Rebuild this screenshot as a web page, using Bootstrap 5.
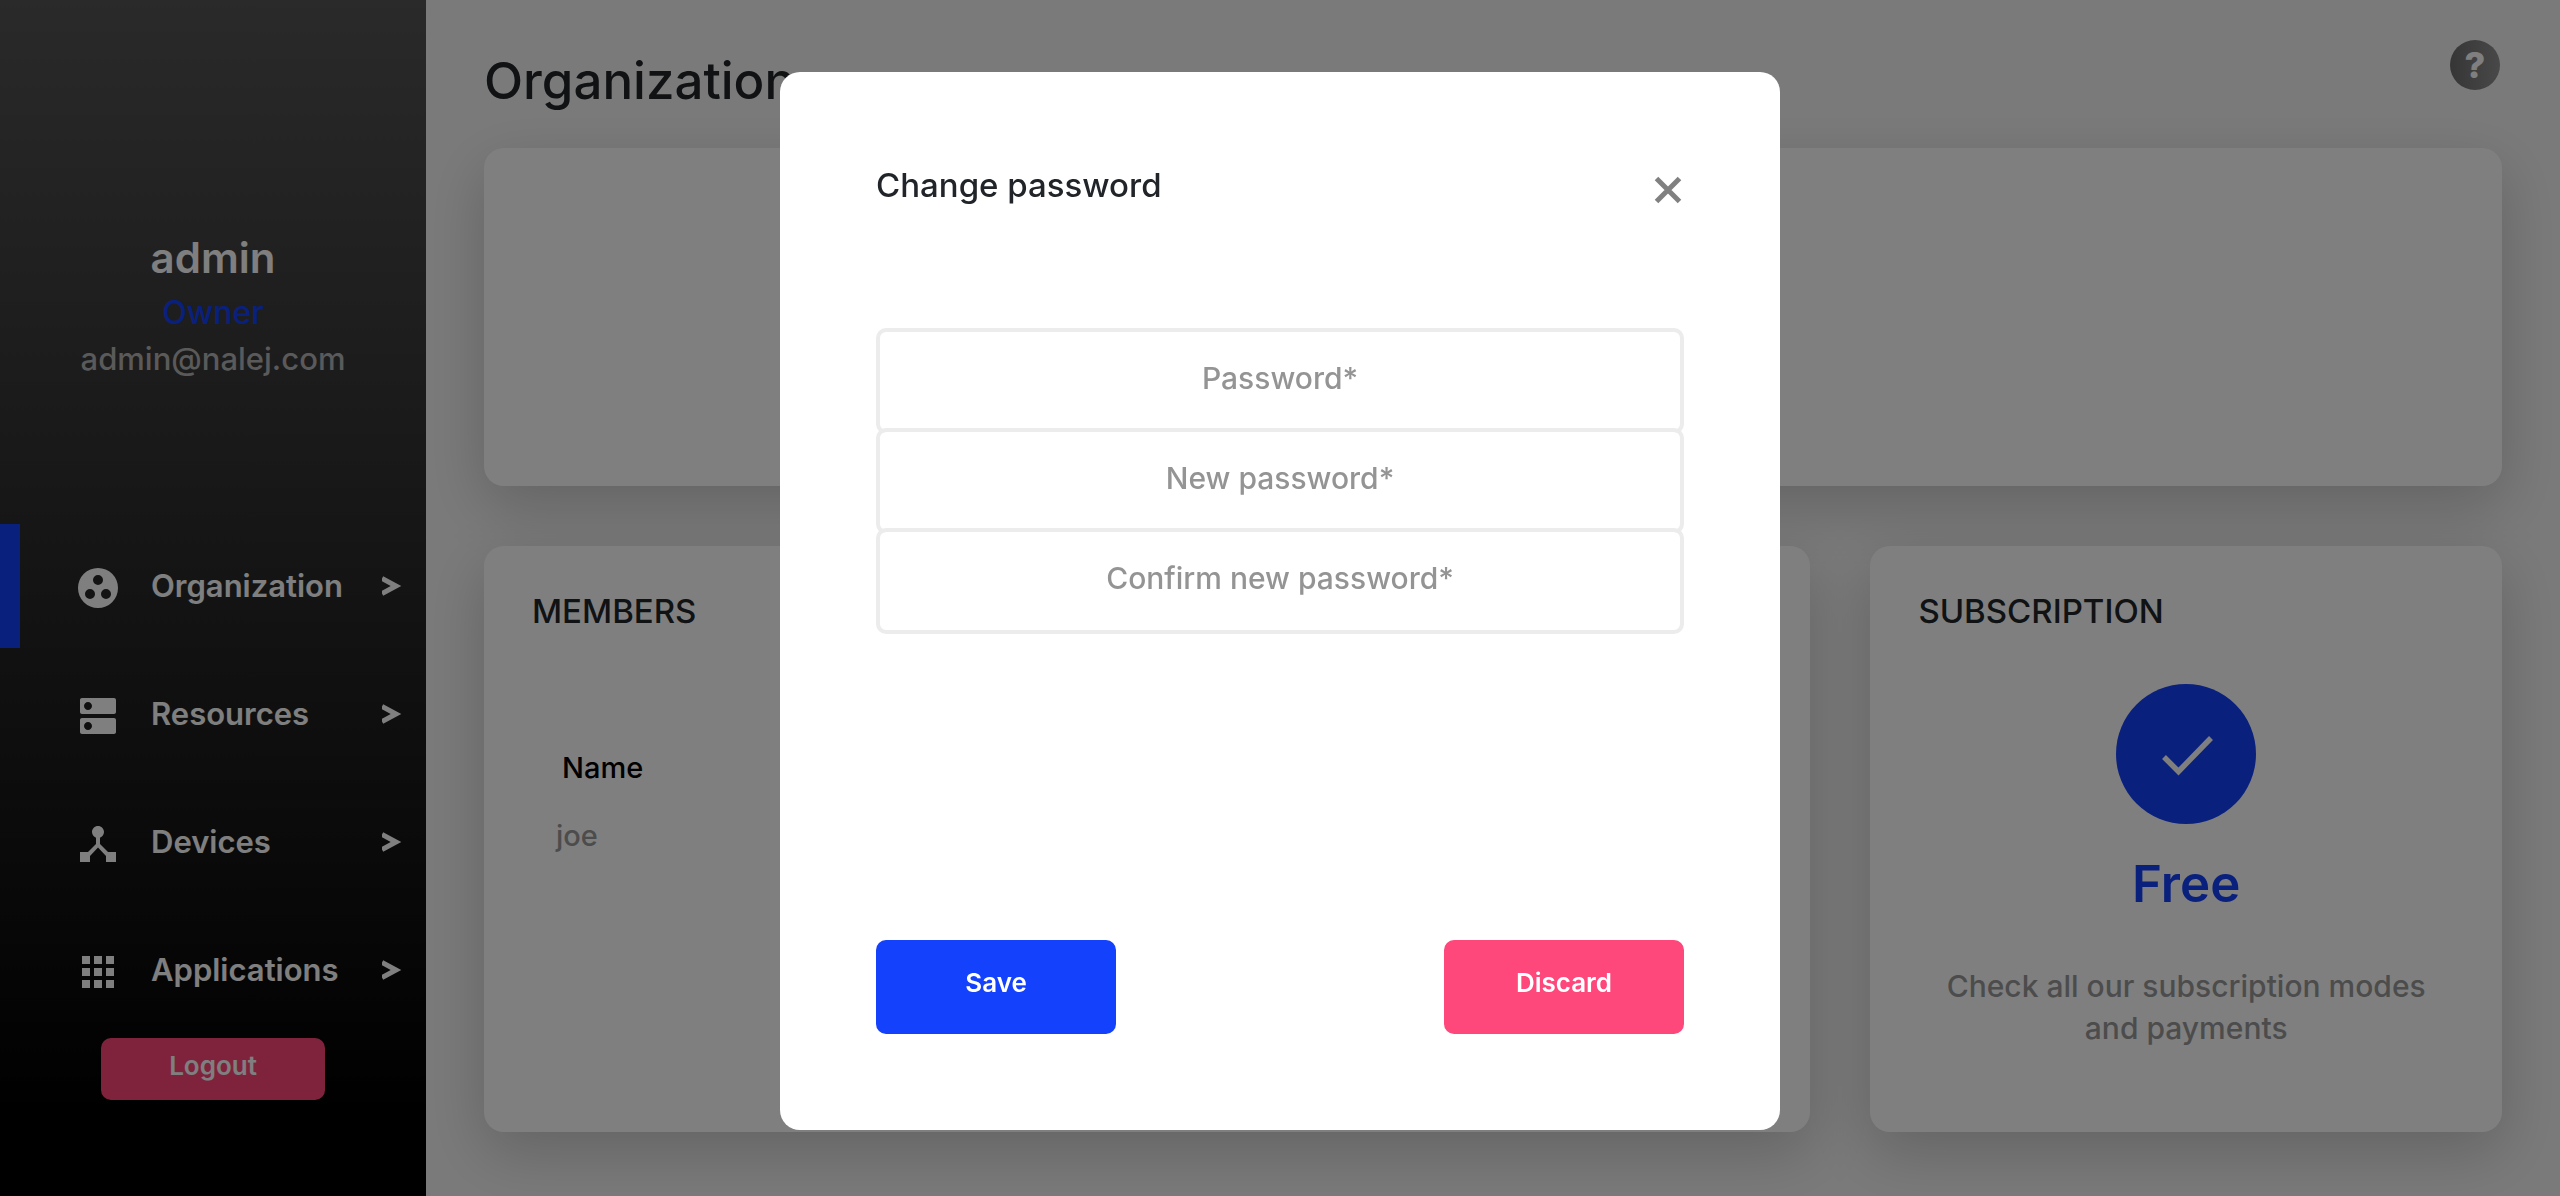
<!DOCTYPE html>
<html lang="en">
<head>
<meta charset="utf-8">
<meta name="viewport" content="width=device-width, initial-scale=1">
<title>Organization</title>
<link href="https://cdn.jsdelivr.net/npm/bootstrap@5.3.0/dist/css/bootstrap.min.css" rel="stylesheet">
<style>
  :root { --brand-blue: #1441fb; --brand-pink: #fe477b; }
  body { font-family: Inter, "Liberation Sans", sans-serif; font-weight: 500; font-size: 29px; background: #f5f5f5; }
  .app-shell { min-height: 100vh; }

  .app-side { width: 426px; padding-top: 233px; background: linear-gradient(#545454, #000 94%); color: #fff; }
  .user-name { font-size: 42px; line-height: 50px; font-weight: 600; }
  .user-role { font-size: 32px; line-height: 40px; margin-top: 10px; color: var(--brand-blue); }
  .user-mail { font-size: 31px; line-height: 40px; margin-top: 6px; color: #b4b4b4; }
  .side-menu { margin-top: 145px; }
  .side-link { height: 124px; margin-bottom: 4px; padding-left: 54px; padding-right: 24px; border-left: 20px solid transparent; color: #fff; font-size: 31px; line-height: 40px; font-weight: 600; text-decoration: none; }
  .side-link.active { border-left-color: var(--brand-blue); }
  .side-link .menu-icon { width: 48px; height: 48px; margin: 4px 29px 0 0; fill: currentColor; }
  .side-link .menu-arrow { width: 20px; height: 20px; fill: none; stroke: currentColor; stroke-width: 5; }

  .btn-brand { border: 0; border-radius: 10px; color: #fff; font-size: 26px; line-height: 32px; font-weight: 600; padding: 27px 0 35px; width: 240px; }
  .btn-brand-blue, .btn-brand-blue:hover { background: var(--brand-blue); color: #fff; }
  .btn-brand-pink, .btn-brand-pink:hover { background: var(--brand-pink); color: #fff; }
  .btn-logout { width: 224px; padding: 12px 0 18px; margin-top: 2px; }

  .app-main { padding: 40px 58px 64px; min-width: 0; }
  .page-title { font-size: 51px; line-height: 58px; font-weight: 500; margin: 12px 0 38px; }
  .help-btn { width: 50px; height: 50px; margin-right: 2px; border: 0; border-radius: 50%; background: linear-gradient(90deg, #6c6c6c, #929292); color: #fff; font-size: 36px; line-height: 50px; font-weight: 800; }
  .panel { background: #fff; border-radius: 20px; box-shadow: 0 20px 60px rgba(0, 0, 0, .19); }
  .panel-top { min-height: 338px; }
  .panel-grid { display: grid; grid-template-columns: 21fr 10fr; gap: 60px; margin-top: 60px; }
  .panel-body { padding: 45px 48px 0; }
  .panel-title { font-size: 33px; line-height: 40px; font-weight: 500; margin: 0; }
  .member-table { margin-top: 103px; }
  .member-table th { height: 68px; padding: 0 0 0 30px; font-weight: 500; color: #000; }
  .member-table td { height: 68px; padding: 0 0 0 24px; color: #999; }
  .plan-icon { width: 140px; height: 140px; margin-top: 53px; }
  .plan-name { font-size: 51px; line-height: 58px; font-weight: 600; margin-top: 31px; color: var(--brand-blue); }
  .plan-note { font-size: 30px; line-height: 42px; margin: 52px 0 0; color: #999; }

  .pw-dialog { max-width: 1000px; margin: 72px auto; }
  .pw-content { border: 0; border-radius: 20px; padding: 93px 96px 96px; }
  .pw-title { font-size: 33px; line-height: 40px; font-weight: 500; margin: 0; }
  .pw-close { width: 32px; height: 32px; margin-top: 9px; }
  .pw-fields { margin-top: 122px; }
  .pw-field + .pw-field { margin-top: -6px; }
  .form-floating > .pw-input { height: 106px; border: 4px solid #ececec; border-radius: 10px; padding: 0 20px; text-align: center; font-size: 30px; font-weight: 500; }
  .form-floating > .pw-label { width: 100%; padding: 32px 0; border: 0; text-align: center; font-size: 30px; line-height: 36px; color: #949494; }
  .pw-actions { margin-top: 306px; }
</style>
<script src="https://cdn.jsdelivr.net/npm/bootstrap@5.3.0/dist/js/bootstrap.bundle.min.js"></script>
</head>
<body>
<div class="app-shell d-flex">
  <aside class="app-side flex-shrink-0 d-flex flex-column">
    <div class="text-center">
      <div class="user-name">admin</div>
      <div class="user-role">Owner</div>
      <div class="user-mail">admin@nalej.com</div>
    </div>
    <nav class="side-menu">
      <a class="side-link active d-flex align-items-center" href="#organization">
        <svg class="menu-icon" viewBox="0 0 24 24" aria-hidden="true"><path fill-rule="evenodd" d="M12 2a10 10 0 1 0 0 20a10 10 0 1 0 0-20zM8 17.5a2.5 2.5 0 1 1 0-5a2.5 2.5 0 1 1 0 5zM9.500 8a2.5 2.5 0 1 1 5 0a2.5 2.5 0 1 1-5 0zM16 17.500a2.5 2.500 0 1 1 0-5a2.5 2.5 0 1 1 0 5z"/></svg>
        <span class="flex-grow-1">Organization</span>
        <svg class="menu-arrow" viewBox="0 0 20 20" aria-hidden="true"><path d="M0 2.500L14 10L0 17.500"/></svg>
      </a>
      <a class="side-link d-flex align-items-center" href="#resources">
        <svg class="menu-icon" viewBox="0 0 24 24" aria-hidden="true"><path d="M20 13H4c-.55 0-1 .45-1 1v6c0 .55.45 1 1 1h16c.55 0 1-.45 1-1v-6c0-.55-.45-1-1-1zM7 19c-1.1 0-2-.9-2-2s.9-2 2-2 2 .9 2 2-.9 2-2 2zM20 3H4c-.55 0-1 .45-1 1v6c0 .55.45 1 1 1h16c.55 0 1-.45 1-1V4c0-.55-.45-1-1-1zM7 9c-1.1 0-2-.9-2-2s.9-2 2-2 2 .9 2 2-.9 2-2 2z"/></svg>
        <span class="flex-grow-1">Resources</span>
        <svg class="menu-arrow" viewBox="0 0 20 20" aria-hidden="true"><path d="M0 2.500L14 10L0 17.500"/></svg>
      </a>
      <a class="side-link d-flex align-items-center" href="#devices">
        <svg class="menu-icon" viewBox="0 0 24 24" aria-hidden="true"><path d="M17 16l-4-4V8.820C14.160 8.400 15 7.300 15 6c0-1.660-1.340-3-3-3S9 4.340 9 6c0 1.300.84 2.400 2 2.820V12l-4 4H3v5h5v-3.050l4-4.200 4 4.200V21h5v-5h-4z"/></svg>
        <span class="flex-grow-1">Devices</span>
        <svg class="menu-arrow" viewBox="0 0 20 20" aria-hidden="true"><path d="M0 2.500L14 10L0 17.500"/></svg>
      </a>
      <a class="side-link d-flex align-items-center" href="#applications">
        <svg class="menu-icon" viewBox="0 0 24 24" aria-hidden="true"><path d="M4 8h4V4H4v4zm6 12h4v-4h-4v4zm-6 0h4v-4H4v4zm0-6h4v-4H4v4zm6 0h4v-4h-4v4zm6-10v4h4V4h-4zm-6 4h4V4h-4v4zm6 6h4v-4h-4v4zm0 6h4v-4h-4v4z"/></svg>
        <span class="flex-grow-1">Applications</span>
        <svg class="menu-arrow" viewBox="0 0 20 20" aria-hidden="true"><path d="M0 2.500L14 10L0 17.500"/></svg>
      </a>
    </nav>
    <button type="button" class="btn btn-brand btn-brand-pink btn-logout align-self-center">Logout</button>
  </aside>

  <main class="app-main flex-grow-1 d-flex flex-column">
    <header class="d-flex justify-content-between align-items-start">
      <h1 class="page-title">Organization</h1>
      <button type="button" class="help-btn p-0" aria-label="Help">?</button>
    </header>
    <section class="panel panel-top"></section>
    <div class="panel-grid flex-grow-1">
      <section class="panel panel-body">
        <h2 class="panel-title">MEMBERS</h2>
        <table class="member-table w-100">
          <thead><tr><th scope="col">Name</th></tr></thead>
          <tbody><tr><td>joe</td></tr></tbody>
        </table>
      </section>
      <section class="panel panel-body d-flex flex-column">
        <h2 class="panel-title">SUBSCRIPTION</h2>
        <svg class="plan-icon align-self-center" viewBox="0 0 140 140" aria-hidden="true"><circle cx="70" cy="70" r="70" fill="#1441fb"/><path d="M48 73L62.500 87.500L95 54" fill="none" stroke="#fff" stroke-width="5.500"/></svg>
        <div class="plan-name text-center">Free</div>
        <p class="plan-note text-center">Check all our subscription modes and payments</p>
      </section>
    </div>
  </main>
</div>

<div class="modal-backdrop show"></div>
<div class="modal d-block" tabindex="-1" role="dialog" aria-modal="true" aria-labelledby="pwTitle">
  <div class="modal-dialog pw-dialog">
    <form class="modal-content pw-content">
      <div class="d-flex justify-content-between align-items-start">
        <h2 class="pw-title" id="pwTitle">Change password</h2>
        <button type="button" class="btn pw-close p-0 border-0 d-flex" aria-label="Close">
          <svg width="32" height="32" viewBox="0 0 32 32" fill="none" stroke="#808080" stroke-width="5" aria-hidden="true"><path d="M4.500 4.500L27.500 27.500M27.500 4.500L4.500 27.500"/></svg>
        </button>
      </div>
      <div class="pw-fields">
        <div class="form-floating pw-field">
          <input class="form-control pw-input" id="pwOld" type="password" placeholder=" ">
          <label class="pw-label" for="pwOld">Password*</label>
        </div>
        <div class="form-floating pw-field">
          <input class="form-control pw-input" id="pwNew" type="password" placeholder=" ">
          <label class="pw-label" for="pwNew">New password*</label>
        </div>
        <div class="form-floating pw-field">
          <input class="form-control pw-input" id="pwConfirm" type="password" placeholder=" ">
          <label class="pw-label" for="pwConfirm">Confirm new password*</label>
        </div>
      </div>
      <div class="pw-actions d-flex justify-content-between">
        <button type="button" class="btn btn-brand btn-brand-blue">Save</button>
        <button type="button" class="btn btn-brand btn-brand-pink">Discard</button>
      </div>
    </form>
  </div>
</div>
</body>
</html>
